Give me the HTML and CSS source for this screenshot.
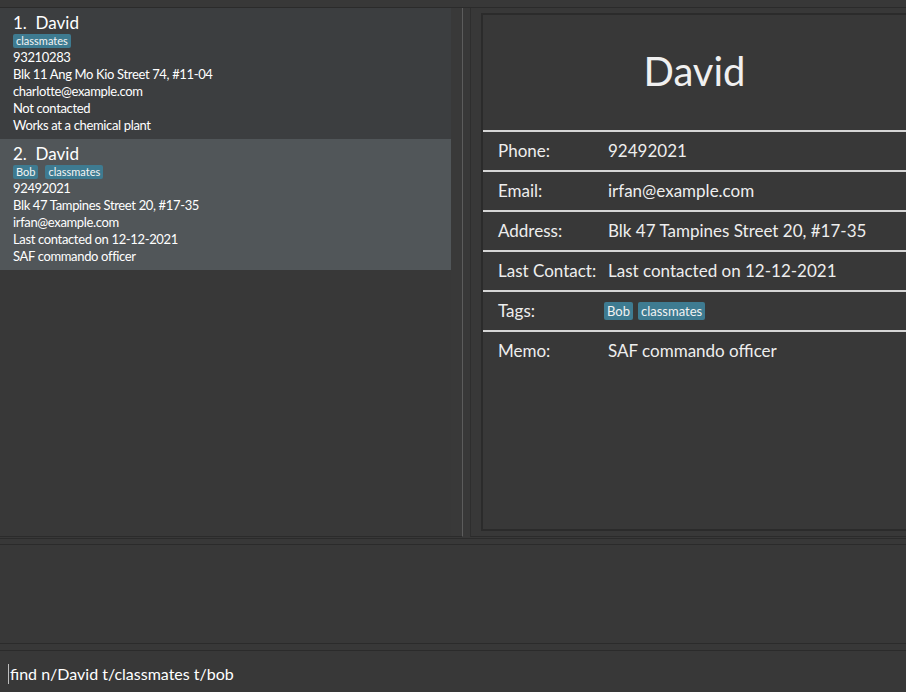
FILE: index.html
```html
<!DOCTYPE html>
<html>
<head>
<meta charset="utf-8">
<title>Address Book</title>
<link rel="stylesheet" href="styles.css">
</head>
<body>
<div class="app">
  <div class="top-strip"></div>
  <div class="main">
    <div class="list-pane">
      <div class="list">
        <div class="card">
          <div class="card-name">1.  David</div>
          <div class="card-tags"><span class="tag">classmates</span></div>
          <div class="card-line">93210283</div>
          <div class="card-line">Blk 11 Ang Mo Kio Street 74, #11-04</div>
          <div class="card-line">charlotte@example.com</div>
          <div class="card-line">Not contacted</div>
          <div class="card-line">Works at a chemical plant</div>
        </div>
        <div class="card selected">
          <div class="card-name">2.  David</div>
          <div class="card-tags"><span class="tag">Bob</span><span class="tag">classmates</span></div>
          <div class="card-line">92492021</div>
          <div class="card-line">Blk 47 Tampines Street 20, #17-35</div>
          <div class="card-line">irfan@example.com</div>
          <div class="card-line">Last contacted on 12-12-2021</div>
          <div class="card-line">SAF commando officer</div>
        </div>
      </div>
      <div class="scroll-strip"></div>
    </div>
    <div class="detail-pane">
      <div class="detail-box">
        <div class="detail-name">David</div>
        <div class="detail-row"><span class="label">Phone:</span><span class="value">92492021</span></div>
        <div class="detail-row"><span class="label">Email:</span><span class="value">irfan@example.com</span></div>
        <div class="detail-row"><span class="label">Address:</span><span class="value">Blk 47 Tampines Street 20, #17-35</span></div>
        <div class="detail-row"><span class="label">Last Contact:</span><span class="value">Last contacted on 12-12-2021</span></div>
        <div class="detail-row"><span class="label">Tags:</span><span class="value tags"><span class="dtag">Bob</span><span class="dtag">classmates</span></span></div>
        <div class="detail-row"><span class="label">Memo:</span><span class="value">SAF commando officer</span></div>
      </div>
    </div>
  </div>
  <div class="divider"></div>
  <div class="result"></div>
  <div class="gap"></div>
  <div class="command"><span class="caret"></span>find n/David t/classmates t/bob</div>
</div>
</body>
</html>
```
FILE: styles.css
```css
html, body {
  margin: 0;
  padding: 0;
  background: #383838;
  overflow: hidden;
}
body {
  font-family: Lato, "Open Sans", sans-serif;
  color: #f2f2f2;
}
.app {
  width: 906px;
  height: 692px;
  display: flex;
  flex-direction: column;
}
.top-strip {
  height: 8px;
  box-sizing: border-box;
  border-bottom: 1px solid #2b2b2b;
  flex: none;
}
.main {
  height: 529px;
  flex: none;
  display: flex;
}
.list-pane {
  width: 463px;
  flex: none;
  display: flex;
  box-sizing: border-box;
  border-right: 1px solid #5c5c5c;
  border-bottom: 1px solid #2b2b2b;
}
.list {
  width: 451px;
  flex: none;
}
.scroll-strip {
  flex: 1;
  background: #393939;
}
.card {
  background: #3c3e40;
  height: 131px;
  box-sizing: border-box;
  padding: 5px 0 0 13px;
}
.card.selected {
  background: #515659;
}
.card-name {
  font-size: 17px;
  line-height: 20px;
  white-space: pre;
  color: #ffffff;
}
.card-tags {
  display: flex;
  gap: 7px;
  margin-top: 1px;
  height: 14px;
}
.tag {
  background: #3e7b91;
  color: #f4f4f4;
  font-size: 11px;
  line-height: 14px;
  padding: 0 3px;
  border-radius: 2px;
}
.card-line {
  font-size: 13px;
  line-height: 17px;
  letter-spacing: -0.35px;
  color: #ffffff;
}
.card-tags + .card-line {
  margin-top: 1px;
}
.detail-pane {
  flex: 1;
  margin-left: 7px;
  box-sizing: border-box;
  border-left: 1px solid #2e2e2e;
  border-bottom: 1px solid #2b2b2b;
  padding: 5px 0 5px 10px;
  display: flex;
}
.detail-box {
  flex: 1;
  box-sizing: border-box;
  border: 2px solid #2b2b2b;
  border-right: none;
}
.detail-name {
  height: 115px;
  box-sizing: border-box;
  padding-bottom: 4px;
  display: flex;
  align-items: center;
  justify-content: center;
  font-size: 40px;
  color: #f0f0f0;
}
.detail-row {
  height: 40px;
  box-sizing: border-box;
  border-top: 2px solid #d6d6d6;
  display: flex;
  align-items: center;
  padding: 0 0 1px 15px;
  font-size: 17px;
  color: #eeeeee;
}
.label {
  width: 110px;
  flex: none;
  white-space: nowrap;
}
.value {
  white-space: nowrap;
}
.tags {
  display: flex;
  gap: 5px;
  margin-left: -4px;
}
.dtag {
  background: #3e7b91;
  color: #f2f2f2;
  font-size: 13px;
  line-height: 18px;
  padding: 0 3px;
  border-radius: 2px;
}
.divider {
  height: 7px;
  margin-top: 1px;
  flex: none;
  box-sizing: border-box;
  border-top: 1px solid #2b2b2b;
  border-bottom: 1px solid #2b2b2b;
}
.result {
  height: 99px;
  flex: none;
  box-sizing: border-box;
  border-bottom: 1px solid #2b2b2b;
}
.gap {
  height: 7px;
  flex: none;
  box-sizing: border-box;
  border-bottom: 1px solid #2b2b2b;
}
.command {
  flex: 1;
  display: flex;
  align-items: center;
  padding: 4px 0 0 8px;
  font-size: 16px;
  letter-spacing: 0;
  color: #ffffff;
}
.caret {
  width: 1px;
  height: 20px;
  background: #bdbdbd;
  margin-right: 1px;
}
```
